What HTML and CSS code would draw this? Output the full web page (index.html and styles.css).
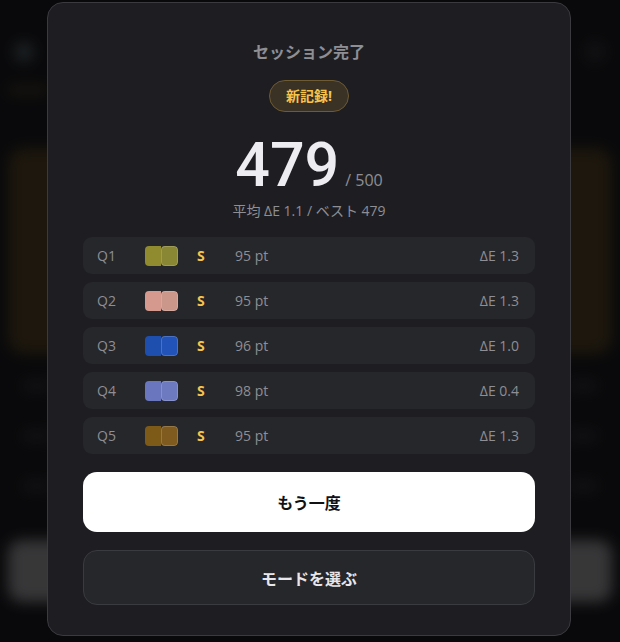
FILE: index.html
```html
<!DOCTYPE html>
<html lang="ja">
<head>
<meta charset="utf-8">
<title>セッション完了</title>
<link rel="stylesheet" href="styles.css">
</head>
<body>
<div class="app" aria-hidden="true">
  <div class="app-header">
    <span class="app-logo"></span>
    <span class="app-spacer"></span>
    <span class="app-icon"></span>
  </div>
  <div class="app-tag"></div>
  <div class="app-card"></div>
  <div class="app-list">
    <div class="app-row"><span class="app-dot"></span><span class="app-dot"></span></div>
    <div class="app-row"><span class="app-dot"></span><span class="app-dot"></span></div>
    <div class="app-row"><span class="app-dot"></span><span class="app-dot"></span></div>
  </div>
  <div class="app-button"></div>
</div>

<div class="overlay">
  <div class="modal">
    <h1 class="title">セッション完了</h1>
    <div class="badge-wrap"><span class="badge">新記録!</span></div>
    <div class="score"><span class="score-num">479</span><span class="score-max">/ 500</span></div>
    <div class="sub">平均 ΔE 1.1 / ベスト 479</div>

    <ul class="rows">
      <li class="row">
        <span class="q">Q1</span>
        <span class="swatch"><span class="half" style="background:#8f8b2e"></span><span class="half right" style="background:#8a8734"></span></span>
        <span class="grade">S</span>
        <span class="pt">95 pt</span>
        <span class="de">ΔE 1.3</span>
      </li>
      <li class="row">
        <span class="q">Q2</span>
        <span class="swatch"><span class="half" style="background:#d6998d"></span><span class="half right" style="background:#cb978b"></span></span>
        <span class="grade">S</span>
        <span class="pt">95 pt</span>
        <span class="de">ΔE 1.3</span>
      </li>
      <li class="row">
        <span class="q">Q3</span>
        <span class="swatch"><span class="half" style="background:#1f4fae"></span><span class="half right" style="background:#2253b8"></span></span>
        <span class="grade">S</span>
        <span class="pt">96 pt</span>
        <span class="de">ΔE 1.0</span>
      </li>
      <li class="row">
        <span class="q">Q4</span>
        <span class="swatch"><span class="half" style="background:#6a77bf"></span><span class="half right" style="background:#6d7ac0"></span></span>
        <span class="grade">S</span>
        <span class="pt">98 pt</span>
        <span class="de">ΔE 0.4</span>
      </li>
      <li class="row">
        <span class="q">Q5</span>
        <span class="swatch"><span class="half" style="background:#7e5a18"></span><span class="half right" style="background:#7f5b1f"></span></span>
        <span class="grade">S</span>
        <span class="pt">95 pt</span>
        <span class="de">ΔE 1.3</span>
      </li>
    </ul>

    <button class="btn btn-primary">もう一度</button>
    <button class="btn btn-secondary">モードを選ぶ</button>
  </div>
</div>
</body>
</html>
```

FILE: styles.css
```css
* { box-sizing: border-box; }
html, body { margin: 0; padding: 0; }
body {
  width: 620px;
  height: 642px;
  overflow: hidden;
  background: #0f0f12;
  font-family: "Open Sans", "Noto Sans CJK JP", sans-serif;
  position: relative;
}

/* blurred app behind the modal */
.app {
  padding: 40px 8px 0;
  display: flex;
  flex-direction: column;
  filter: blur(7px);
}
.app-header {
  display: flex;
  align-items: center;
  height: 24px;
  padding: 0 6px;
}
.app-logo {
  width: 20px; height: 20px; border-radius: 50%;
  background: #2e3538;
}
.app-spacer { flex: 1; }
.app-icon {
  width: 22px; height: 22px; border-radius: 50%;
  background: #1b1b1f;
}
.app-tag {
  margin-top: 22px;
  width: 40px; height: 8px;
  background: #2a2418;
  border-radius: 4px;
}
.app-card {
  margin-top: 54px;
  height: 206px;
  border-radius: 16px;
  background: #2d2414;
}
.app-list {
  margin-top: 26px;
  display: flex;
  flex-direction: column;
  gap: 28px;
}
.app-row {
  height: 22px;
  display: flex;
  justify-content: space-between;
  padding: 0 14px;
}
.app-dot {
  width: 30px; height: 12px; border-radius: 6px; background: #1c1c20;
}
.app-button {
  margin-top: 38px;
  height: 62px;
  border-radius: 14px;
  background: #555557;
}

/* modal */
.overlay {
  position: absolute;
  inset: 0;
  background: rgba(0, 0, 0, 0.35);
}
.modal {
  position: absolute;
  left: 47px;
  top: 2px;
  width: 524px;
  height: 634px;
  background: #1e1e22;
  border: 1px solid #3a3a3f;
  border-radius: 16px;
  padding: 37px 35px 30px;
  display: flex;
  flex-direction: column;
}
.modal > * { flex-shrink: 0; }
.title {
  margin: 0;
  text-align: center;
  font-size: 16px;
  line-height: 24px;
  font-weight: 700;
  color: #8e8e94;
}
.badge-wrap {
  margin-top: 16px;
  display: flex;
  justify-content: center;
}
.badge {
  display: inline-block;
  padding: 5px 16px;
  font-size: 14px;
  line-height: 20px;
  font-weight: 700;
  color: #f7c34b;
  background: #3b3226;
  border: 1px solid #6e5a33;
  border-radius: 999px;
}
.score {
  margin-top: 18px;
  height: 71px;
  display: flex;
  justify-content: center;
  align-items: baseline;
  gap: 6px;
  line-height: 70px;
}
.score-num {
  font-family: "Roboto", sans-serif;
  font-size: 61px;
  font-weight: 500;
  color: #ececf1;
}
.score-max {
  font-size: 16px;
  color: #8e8e94;
}
.sub {
  text-align: center;
  font-size: 14px;
  line-height: 20px;
  color: #8e8e94;
}
.rows {
  list-style: none;
  margin: 16px 0 0;
  padding: 0;
  display: flex;
  flex-direction: column;
  gap: 8px;
}
.row {
  height: 37px;
  display: flex;
  align-items: center;
  padding: 0 16px 0 14px;
  background: #26272b;
  border-radius: 9px;
  font-size: 14px;
  color: #8e8e94;
}
.q { width: 48px; }
.swatch {
  width: 33px;
  height: 20px;
  display: flex;
  border-radius: 4px;
  overflow: hidden;
  margin-right: 19px;
}
.half { flex: 1; }
.half.right {
  border: 1px solid rgba(255, 255, 255, 0.18);
  border-radius: 4px;
}
.grade {
  width: 38px;
  color: #f7c34b;
  font-weight: 700;
}
.pt { flex: 1; }
.de { text-align: right; }

.btn {
  display: block;
  width: 100%;
  border-radius: 14px;
  font-family: "Open Sans", "Noto Sans CJK JP", sans-serif;
  font-size: 16px;
  font-weight: 700;
  cursor: pointer;
}
.btn-primary {
  margin-top: 18px;
  height: 60px;
  background: #ffffff;
  color: #111114;
  border: none;
}
.btn-secondary {
  margin-top: 18px;
  height: 55px;
  background: #26272b;
  color: #e6e6eb;
  border: 1px solid #3a3b40;
}
```
